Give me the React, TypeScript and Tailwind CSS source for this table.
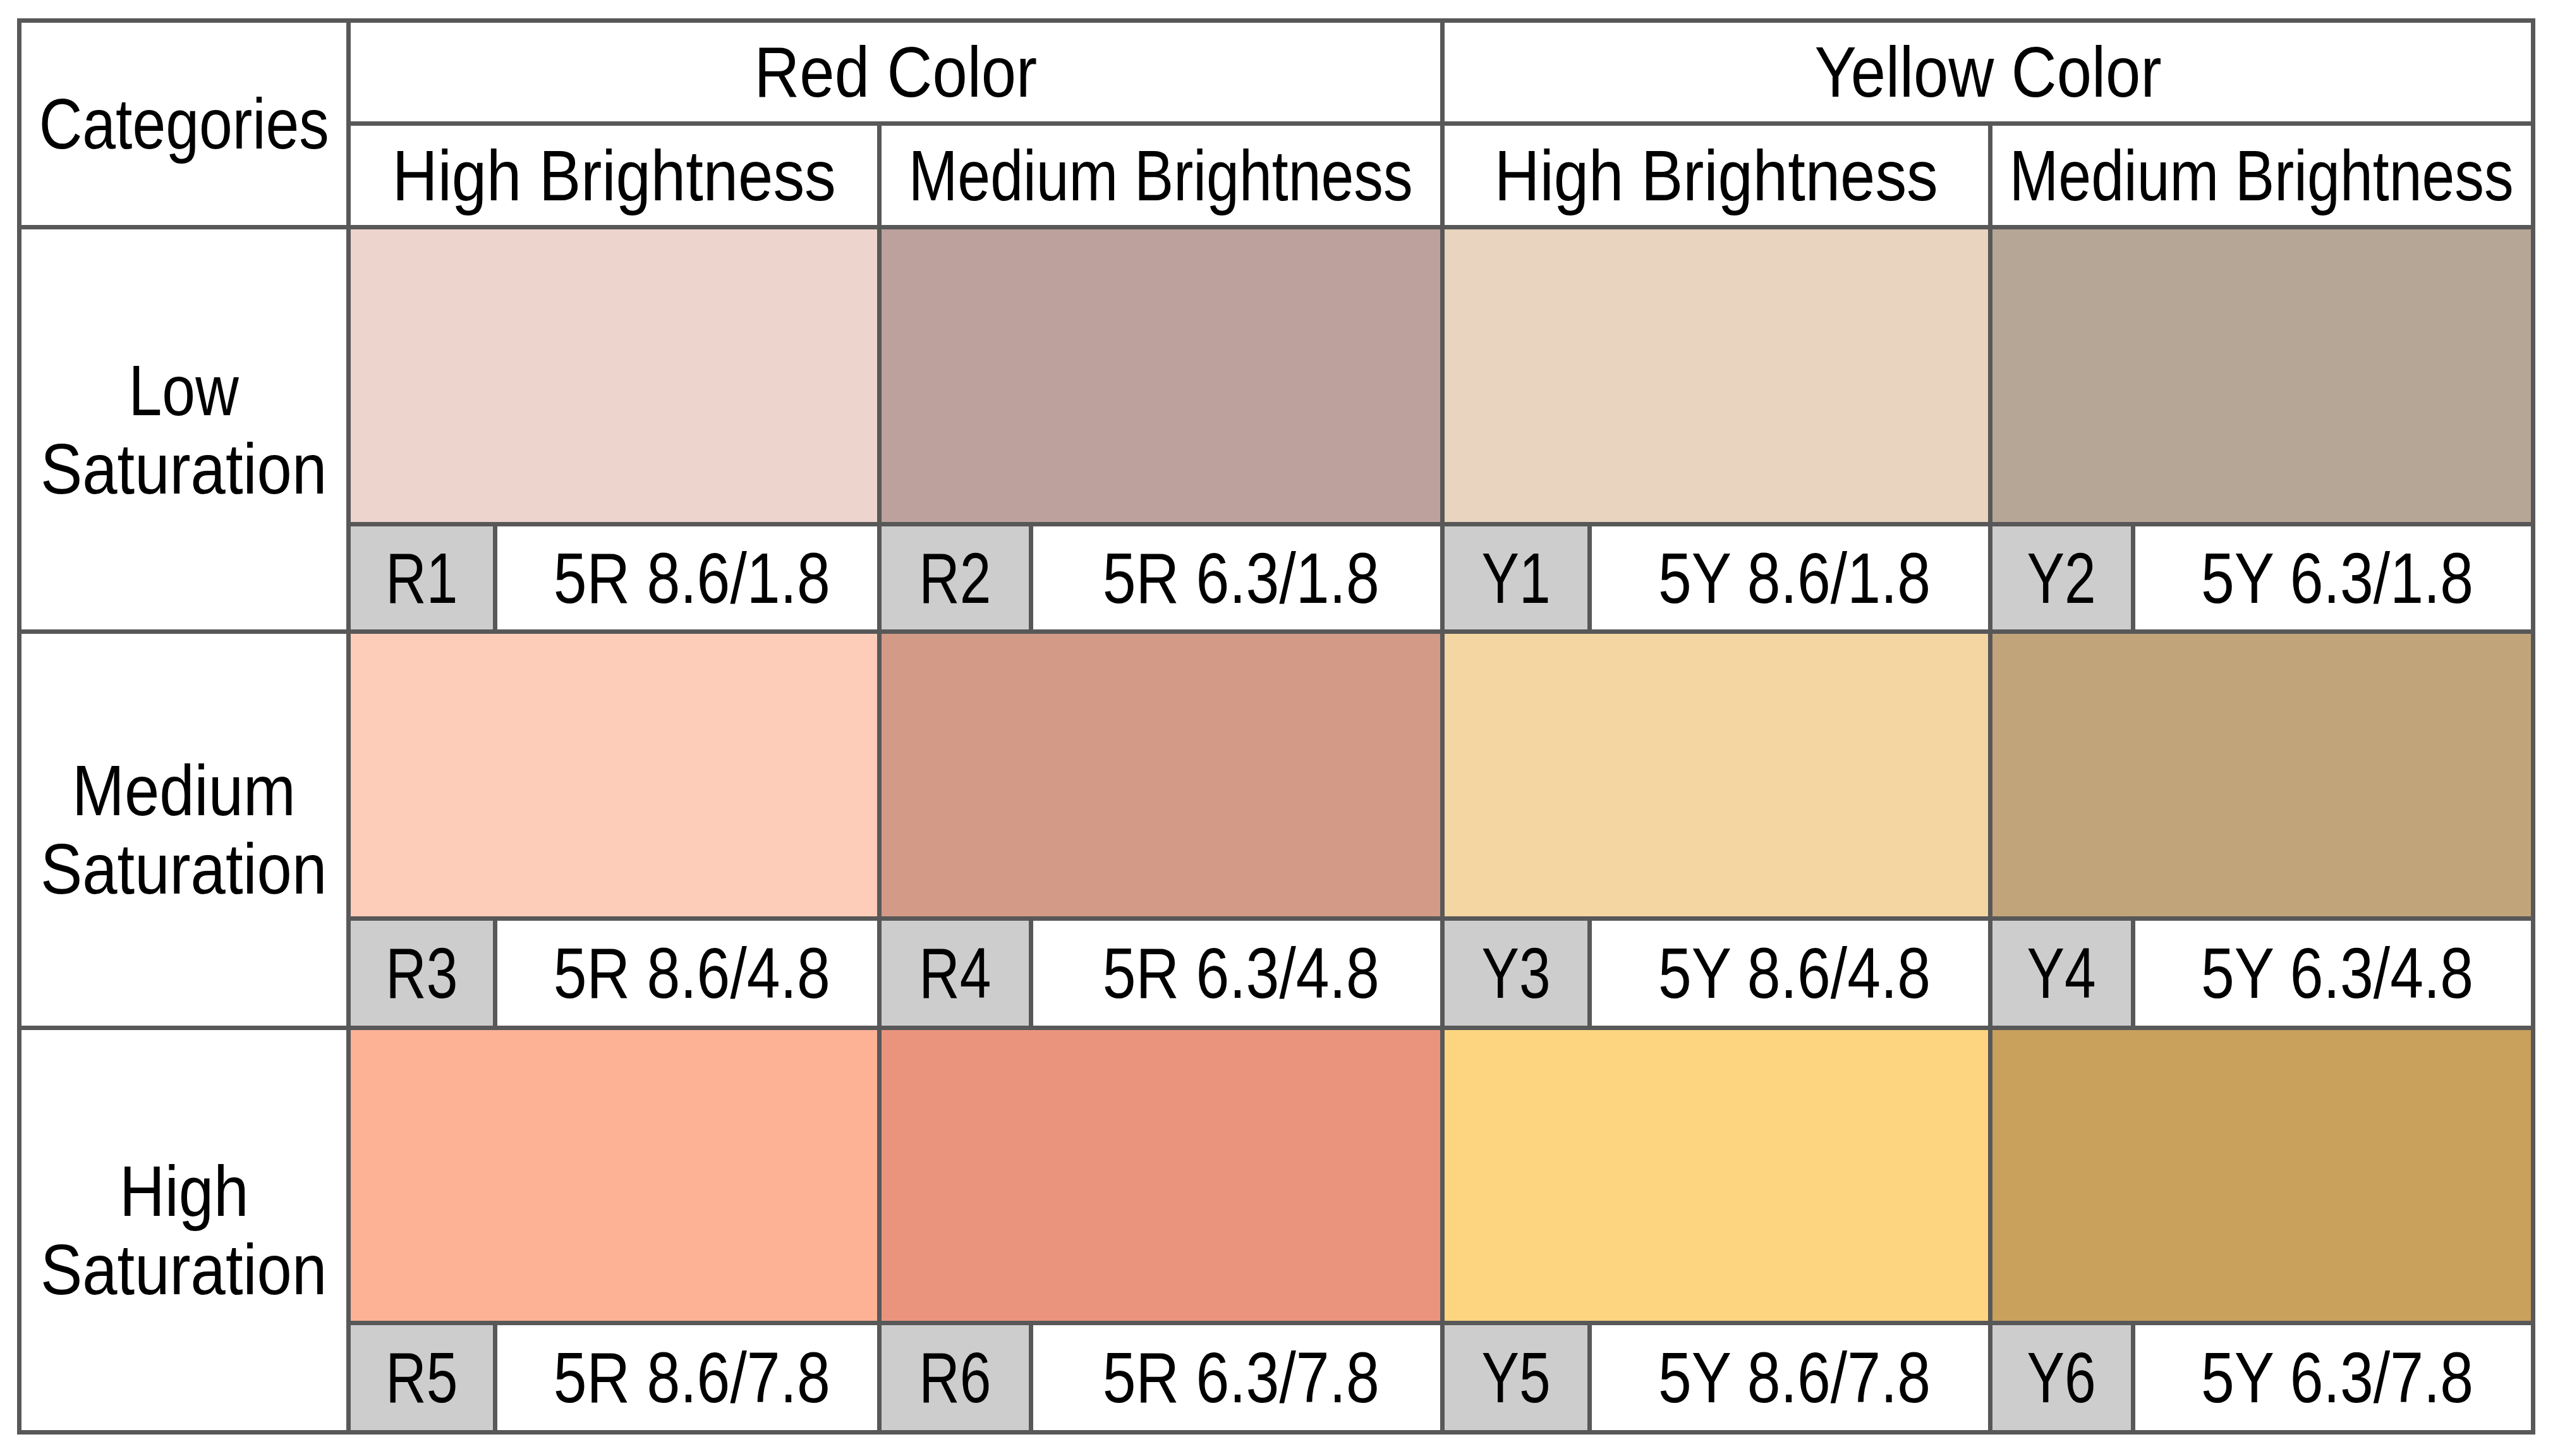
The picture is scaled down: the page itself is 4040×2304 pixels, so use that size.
import React from "react";

type S = "a" | "b" | "c" | "d";
const scales: Record<S, string> = {
  a: "scale-x-[0.84]",
  b: "scale-x-[0.88]",
  c: "scale-x-[0.825]",
  d: "scale-x-[0.79]",
};

const T = ({ children, s = "a" }: { children: React.ReactNode; s?: S }) => (
  <span className={`inline-block whitespace-nowrap text-center ${scales[s]}`}>{children}</span>
);

const cell = "bg-white flex items-center justify-center";
const code = "bg-[#cdcdcd] flex items-center justify-center";

const Label = ({ a, b }: { a: string; b: string }) => (
  <div className={`${cell} row-span-2 flex-col`}>
    <T s={a === "Low" ? "a" : "b"}>{a}</T>
    <T s="b">{b}</T>
  </div>
);

const CodeRow = ({ items }: { items: [string, string][] }) => (
  <>
    {items.map(([c, v]) => (
      <React.Fragment key={c}>
        <div className={code}>
          <T s="d">{c}</T>
        </div>
        <div className={`${cell} pl-[14px]`}>
          <T>{v}</T>
        </div>
      </React.Fragment>
    ))}
  </>
);

export default function App() {
  return (
    <div className="min-h-screen w-full bg-white pl-[27px] pt-[29px] font-['Liberation_Sans',Arial,sans-serif] text-[113px] leading-[124px] text-black">
      <div className="grid w-max gap-[7px] bg-[#585858] p-[7px] grid-cols-[514px_225px_601px_233px_644px_226px_627px_219px_626px] grid-rows-[156px_157px_463px_163px_447px_166px_460px_166px]">
        {/* header */}
        <div className={`${cell} row-span-2`}>
          <T>Categories</T>
        </div>
        <div className={`${cell} col-span-4`}>
          <T s="b">Red Color</T>
        </div>
        <div className={`${cell} col-span-4`}>
          <T s="b">Yellow Color</T>
        </div>
        <div className={`${cell} col-span-2`}>
          <T s="b">High Brightness</T>
        </div>
        <div className={`${cell} col-span-2`}>
          <T s="c">Medium Brightness</T>
        </div>
        <div className={`${cell} col-span-2`}>
          <T s="b">High Brightness</T>
        </div>
        <div className={`${cell} col-span-2`}>
          <T s="c">Medium Brightness</T>
        </div>

        {/* Low saturation */}
        <Label a="Low" b="Saturation" />
        <div className="col-span-2 bg-[#edd4cd]" />
        <div className="col-span-2 bg-[#bca19d]" />
        <div className="col-span-2 bg-[#e8d4bf]" />
        <div className="col-span-2 bg-[#b6a696]" />
        <CodeRow
          items={[
            ["R1", "5R 8.6/1.8"],
            ["R2", "5R 6.3/1.8"],
            ["Y1", "5Y 8.6/1.8"],
            ["Y2", "5Y 6.3/1.8"],
          ]}
        />

        {/* Medium saturation */}
        <Label a="Medium" b="Saturation" />
        <div className="col-span-2 bg-[#fdcdb9]" />
        <div className="col-span-2 bg-[#d39a88]" />
        <div className="col-span-2 bg-[#f4d6a3]" />
        <div className="col-span-2 bg-[#c2a47a]" />
        <CodeRow
          items={[
            ["R3", "5R 8.6/4.8"],
            ["R4", "5R 6.3/4.8"],
            ["Y3", "5Y 8.6/4.8"],
            ["Y4", "5Y 6.3/4.8"],
          ]}
        />

        {/* High saturation */}
        <Label a="High" b="Saturation" />
        <div className="col-span-2 bg-[#fdb295]" />
        <div className="col-span-2 bg-[#ea947e]" />
        <div className="col-span-2 bg-[#fdd580]" />
        <div className="col-span-2 bg-[#c9a05c]" />
        <CodeRow
          items={[
            ["R5", "5R 8.6/7.8"],
            ["R6", "5R 6.3/7.8"],
            ["Y5", "5Y 8.6/7.8"],
            ["Y6", "5Y 6.3/7.8"],
          ]}
        />
      </div>
    </div>
  );
}
